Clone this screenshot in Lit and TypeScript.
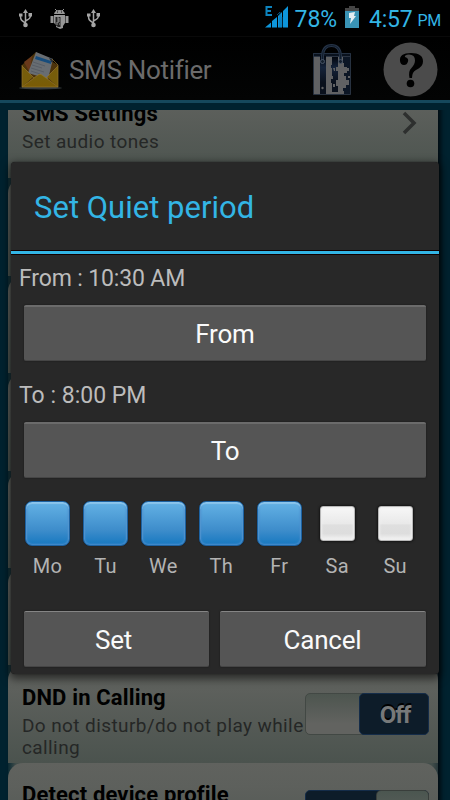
import { LitElement, html, css, svg } from "lit";
import { customElement, property } from "lit/decorators.js";
import { classMap } from "lit/directives/class-map.js";

const usb = svg`<g fill="none" stroke="#a5a5a5" stroke-width="1.5"><path d="M6.5 3v13M6.5 14C2.500 11.500 1.500 11 1.500 7M6.500 12C10.500 10 11.500 9 11.500 6"/></g><path fill="#a5a5a5" d="M6.500 0 9 4H4zM0 4.500h3.500v3H0zM9.500 4h3.500v3.500H9.500z"/><circle cx="6.500" cy="16" r="2.300" fill="#a5a5a5"/>`;

@customElement("status-bar")
export class StatusBar extends LitElement {
  static styles = css`
    :host { display: flex; height: 36px; background: #000; color: #33b5e5; align-items: flex-start; box-sizing: border-box; padding: 8px 9px 0 19px; }
    .left { display: flex; gap: 18px; flex: 1; padding-top: 1px; }
    .battery { margin: -2px 10px 0 8px; }
    .signal { margin: -3px 7px 0 0; }
    .txt { font-size: 23px; line-height: 23px; letter-spacing: -0.1px; white-space: pre; }
    .clock { letter-spacing: -0.2px; }
    .pm { font-size: 16px; line-height: 25px; margin-left: 5px; letter-spacing: -0.3px; }
    svg { display: block; flex: none; }
  `;
  render() {
    return html`
      <div class="left">
        <svg width="13" height="19">${usb}</svg>
        <svg width="19" height="20" viewBox="0 0 19 20">
          <path d="M5 0l2 2M14 0l-2 2" stroke="#969696"/>
          <path d="M4 5q1-4 5.500-4T15 5zM4 6h11v8l-2 3v2l-3 1-4-2v-2l-2-2zM.5 7h3v7h-3zM15.500 7h3v7h-3z" fill="#969696"/>
          <path d="M5.500 8h5v10H8l-2.500-2z" fill="#252525"/>
          <path d="M7 9h2v2H7M9 11v2H7v3M9 15h1" fill="none" stroke="#999"/>
          <path d="M7 3h1M11 3h1" stroke="#111"/>
        </svg>
        <svg width="13" height="19">${usb}</svg>
      </div>
      <svg class="signal" width="23" height="24" viewBox="0 0 23 24">
        <path d="M0 22.500l6-5v5zM7 16l5-4v10.500H7zM13 11l4-4v15.500h-4zM18 6l5-5v21.500h-5z" fill="#0d96dc"/>
        <path d="M7 2H1.500v8H7M1.500 6H6" fill="none" stroke="#0d83bd" stroke-width="2"/>
        <path d="M12 10l3-3v15M17 12v10" fill="none" stroke="#07659c" stroke-width=".7"/>
      </svg>
      <span class="txt">78%</span>
      <svg class="battery" width="14" height="22" viewBox="0 0 14 22">
        <path d="M4 0h6v2h4v3H0V2h4z" fill="#454545"/><path d="M0 5h14v17H0z" fill="#3993b5"/>
        <path d="M4 7l6-1-1 4h2l-6 8 1-6H4z" fill="#e3eef2"/>
      </svg>
      <span class="txt clock">4:57</span><span class="pm">PM</span>
    `;
  }
}

@customElement("title-bar")
export class TitleBar extends LitElement {
  static styles = css`
    :host { display: flex; height: 67px; box-sizing: border-box; background: linear-gradient(#000, #030404); border-top: 1px solid #090909; border-bottom: 3px solid #15485c; align-items: center; padding: 0 12px 0 19px; color: #6b6b6b; }
    .name { font-size: 26px; flex: 1; margin-left: 7px; padding-top: 3px; letter-spacing: -0.32px; white-space: nowrap; }
    .mail { margin-top: 4px; }
    .bag { margin: 1px 32px 0 0; }
    .help { margin-top: 2px; }
    svg { display: block; flex: none; }
  `;
  render() {
    return html`
      <svg class="mail" width="43" height="39" viewBox="0 0 43 39">
        <defs>
          <linearGradient id="env" x2="0" y2="1"><stop stop-color="#75600c"/><stop offset="1" stop-color="#7b5b05"/></linearGradient>
        </defs>
        <ellipse cx="21.500" cy="37" rx="21.500" ry="1.500" fill="#343a3d"/>
        <path d="M3 14L17 1l22 13v22H3z" fill="#4c330b"/>
        <path d="M5 11l8-6-2 17z" fill="#69391b"/>
        <path d="M17 1l17 7-5 20-20-6z" fill="#686d72"/>
        <path d="M17 5l15 5v3l-16-5z" fill="#164c7c"/>
        <path d="M30 7l4 1-1 4z" fill="#292f36"/>
        <path d="M14 11l12 4M13 14l10 3M12 17l13 4M12 20l9 3" stroke="#505660" stroke-width=".7"/>
        <path d="M3 15l11 11L3 36zM39 15L28 26l11 10z" fill="#775d0b"/>
        <path d="M3 36l16-12q2-1.500 4 0l16 12z" fill="url(#env)"/>
        <path d="M3 15l12 12M39 15L27 27M3 36l16-12q2-1.500 4 0l16 12M3 14v22h36V14L33 8" fill="none" stroke="#96762c" stroke-width=".7"/>
      </svg>
      <span class="name">SMS Notifier</span>
      <svg class="bag" width="38" height="51" viewBox="0 0 38 51">
        <defs><linearGradient id="stripe" x2="0" y2="1"><stop stop-color="#02060e"/><stop offset=".3" stop-color="#15233a"/><stop offset=".7" stop-color="#0a111d"/></linearGradient></defs>
        <path d="M.5 9.500h37v41H.5z" fill="#606163"/>
        <path d="M.5 9.500h37v3H.5z" fill="#0a121e" stroke="#263244" stroke-width=".7"/>
        <path d="M7 12h6v38H7z" fill="url(#stripe)"/>
        <path d="M19 13h6v10h-2v4h2v9h-2v6h2v6h-6v-9h-1v-4h2v-3h-1v-8h-1v-3h1z" fill="url(#stripe)"/>
        <path d="M30 13h7v37h-6v-3h-1v-3h3v-3h3v-5h-3v-4h-2v-3h3v-6h-3v-4h-1z" fill="#0c1625"/>
        <path d="M33 24h3v3h-2zM20 24h2v3h-1zM20 40h2v3h-2zM35 32h2v2h-2z" fill="#606163"/>
        <path d="M.5 9.500h37v41H.5z" fill="none" stroke="#263244" stroke-width=".8"/>
        <path d="M9.500 17V12Q10 1.500 18.500 1.500T27.500 12v5" fill="none" stroke="#263448" stroke-width="3"/>
        <path d="M9.500 17V12Q10 1.500 18.500 1.500T27.500 12v5" fill="none" stroke="#101b29"/>
        <circle cx="9.500" cy="17.500" r="2" fill="#15202e" stroke="#485466"/>
        <circle cx="27.500" cy="17.500" r="2" fill="#15202e" stroke="#485466"/>
        <circle cx="9.500" cy="44" r="1.200" fill="#606163"/>
      </svg>
      <svg class="help" width="55" height="55" viewBox="0 0 55 55">
        <circle cx="27.500" cy="27.500" r="27" fill="#4b4b4b"/>
        <path d="M17 19Q16 11 28 11Q40 11 40 19.500Q40 25 33 28Q29 30 29 36H26.500Q25 29 28.500 26Q32 22 32 18.500Q32 12.500 26 12.500Q21 13 22 15Q26 16 25 19.500Q24 23 21 23Q17.500 23 17 19Z" fill="#000"/>
        <circle cx="27.500" cy="41.500" r="3.800" fill="#000"/>
      </svg>
    `;
  }
}

@customElement("setting-card")
export class SettingCard extends LitElement {
  @property() heading = "";
  @property() detail = "";
  @property() control = "";
  static styles = css`
    :host { display: block; height: 97.4px; box-sizing: border-box; border-radius: 15px 15px 0 0; background: linear-gradient(#60625e, #5d605c 25%, #4b534e); }
    .row { display: flex; padding: 18.5px 9px 0 14px; }
    .copy { flex: 1; min-width: 0; }
    .heading { font-weight: 700; font-size: 22px; line-height: 27px; color: #000; letter-spacing: 0.15px; white-space: nowrap; }
    .detail { margin-top: 4px; font-size: 19px; line-height: 22.5px; color: #252726; letter-spacing: 0.4px; white-space: pre; }
    .toggle { flex: none; display: flex; box-sizing: border-box; width: 124px; height: 42px; margin-top: 9px; margin-left: -20px; border: 1px solid #424844; border-radius: 5px; background: linear-gradient(#4d554f, #626360 75%); }
    .knob { width: 70px; height: 42px; margin: -1px -1px 0 auto; box-sizing: border-box; border: 1px solid #142c49; border-radius: 5px; background: #0d1c29; color: #77797a; font: 700 24px/43px Roboto, sans-serif; letter-spacing: -1px; padding-left: 2px; text-align: center; text-shadow: 0 -2px #000; }
    .on { background: #0d1c29; border-color: #142c49; }
    .on .knob { width: 53px; background: linear-gradient(#4b5650, #626360); border-color: #393e3b; }
    .chev { margin: 11px 12px 0 0; flex: none; }
  `;
  render() {
    return html`<div class="row">
      <div class="copy"><div class="heading">${this.heading}</div><div class="detail">${this.detail}</div></div>
      ${this.control === "chevron"
        ? html`<svg class="chev" width="15" height="24"><path d="M2 2l10 10L2 22" fill="none" stroke="#2d2f2e" stroke-width="3.500"/></svg>`
        : this.control
          ? html`<div class=${classMap({ toggle: true, on: this.control === "on" })}><div class="knob">${this.control === "off" ? "Off" : ""}</div></div>`
          : ""}
    </div>`;
  }
}

@customElement("quiet-dialog")
export class QuietDialog extends LitElement {
  static styles = css`
    :host { display: block; box-sizing: border-box; width: 428px; height: 512px; background: #282828; border-radius: 4px; box-shadow: 0 3px 8px 2px rgba(0, 0, 0, 0.55), 0 0 1px #111; }
    .title { height: 92px; box-sizing: border-box; padding: 0 23px; line-height: 91px; font-size: 31px; color: #33b5e5; letter-spacing: 0.02px; border-bottom: 3px solid #33b5e5; box-shadow: 0 1px #100, inset 0 -1px #100; }
    .body { padding: 10px 13px 0; }
    .label { margin-left: -5px; height: 41px; font-size: 23px; line-height: 29px; color: #bcbcbc; letter-spacing: -0.15px; white-space: pre; }
    .second { margin-top: 20px; letter-spacing: 0; }
    .btn { display: flex; align-items: center; justify-content: center; box-sizing: border-box; height: 56px; padding-top: 0; background: #555; border-top: 2px solid #6b6b6b; border-bottom: 1px solid #454545; border-radius: 2px; color: #fafafa; font-size: 26px; letter-spacing: -0.2px; box-shadow: 0 0 1px 1px #232323; }
    .days { display: grid; grid-template-columns: repeat(7, 57.95px); margin: 23px -5px 0 -5px; }
    .day { display: flex; flex-direction: column; align-items: center; font-size: 20px; line-height: 24px; color: #b3b3b3; letter-spacing: 0.2px; }
    .box { width: 45px; height: 45px; box-sizing: border-box; border-radius: 7px; border: 1px solid #1c62a2; background: linear-gradient(#64b2e5, #3e8dcb 65%, #1678c0); box-shadow: inset 0 2px 1px #8bc5ec, inset 0 0 2px 1px #4c8ecc, 0 0 1px #101820; }
    .off { width: 35px; height: 35px; margin: 5px; border: 1px solid #b8b8b8; border-radius: 3px; background: linear-gradient(#f7f7f7, #e9e9e9 50%, #dfdfdf 55%, #ddd 80%, #f4f4f4); box-shadow: inset 0 0 2px 1px #eee, 0 0 3px #000; }
    .name { margin-top: 8px; margin-left: -1px; }
    .actions { display: grid; grid-template-columns: 185px 206px; gap: 11px; margin-top: 33px; }
    .actions .btn { border-top-width: 1px; border-top-color: #858585; padding: 2px 1px 0 0; }
    .actions .btn:first-child { padding-right: 6px; }
  `;
  render() {
    const days = ["Mo", "Tu", "We", "Th", "Fr", "Sa", "Su"];
    return html`
      <div class="title">Set Quiet period</div>
      <div class="body">
        <div class="label">From : 10:30 AM</div>
        <div class="btn">From</div>
        <div class="label second">To : 8:00 PM</div>
        <div class="btn">To</div>
        <div class="days">
          ${days.map((d, i) => html`<div class="day"><div class=${classMap({ box: true, off: i > 4 })}></div><div class="name">${d}</div></div>`)}
        </div>
        <div class="actions"><div class="btn">Set</div><div class="btn">Cancel</div></div>
      </div>
    `;
  }
}

@customElement("app-root")
export class AppRoot extends LitElement {
  static styles = css`
    :host { display: block; position: relative; width: 450px; height: 800px; overflow: hidden; background: #00222f; font-family: Roboto, sans-serif; }
    .content { height: 690px; margin-top: 7px; overflow: hidden; }
    .list { width: 430px; margin: -29px 0 0 8px; background: linear-gradient(90deg, #0b2a33, #434e4b 8px, #434e4b 424px, #29393c); box-shadow: 3px 0 4px #000c12; }
    .dialog { position: absolute; left: 11px; top: 162px; }
  `;
  render() {
    return html`
      <status-bar></status-bar>
      <title-bar></title-bar>
      <div class="content"><div class="list">
        <setting-card heading="SMS Settings" detail="Set audio tones" control="chevron"></setting-card>
        ${[0, 1, 2, 3, 4].map(() => html`<setting-card></setting-card>`)}
        <setting-card heading="DND in Calling" detail=${"Do not disturb/do not play while\ncalling"} control="off"></setting-card>
        <setting-card heading="Detect device profile" control="on"></setting-card>
      </div></div>
      <quiet-dialog class="dialog"></quiet-dialog>
    `;
  }
}
